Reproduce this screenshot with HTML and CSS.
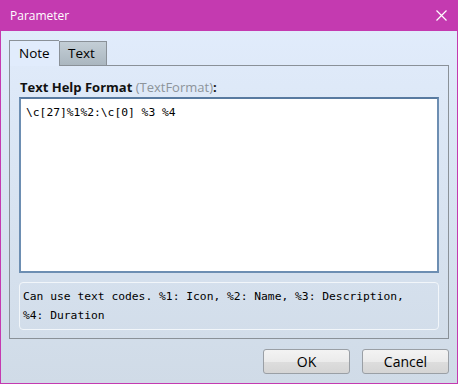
FILE: index.html
```html
<!DOCTYPE html>
<html lang="en">
<head>
  <meta charset="UTF-8" />
  <title>Parameter</title>
  <link rel="stylesheet" href="styles.css">
</head>
<body>
  <div class="window">
    <header class="titlebar">
      <span class="title">Parameter</span>
      <svg class="close" width="11" height="11" viewBox="0 0 11 11">
        <path d="M0.5 0.5 L10.5 10.5 M10.5 0.5 L0.5 10.5" stroke="#fff" stroke-width="1.2" fill="none" />
      </svg>
    </header>

    <div class="content">
      <div class="tabs">
        <div class="tab active">Note</div>
        <div class="tab">Text</div>
      </div>

      <section class="panel">
        <label class="field-label">Text Help Format <span class="hint">(TextFormat)</span>:</label>
        <div class="editor">\c[27]%1%2:\c[0] %3 %4</div>
        <div class="note">Can use text codes. %1: Icon, %2: Name, %3: Description,<br>%4: Duration</div>
      </section>

      <div class="buttons">
        <button class="btn">OK</button>
        <button class="btn">Cancel</button>
      </div>
    </div>
  </div>
</body>
</html>
```

FILE: styles.css
```css
* { box-sizing: border-box; margin: 0; padding: 0; }
html, body { width: 458px; height: 384px; overflow: hidden; }
body {
  font-family: 'Open Sans', 'Noto Sans', sans-serif;
  font-size: 12px;
  color: #000;
}

.window {
  width: 458px;
  height: 384px;
  border: 1px solid #c43ab0;
  border-top: none;
  display: flex;
  flex-direction: column;
  background: linear-gradient(#e2edfd, #d0dbe7);
}

.titlebar {
  height: 31px;
  margin: 0 -1px;
  background-color: #c43ab0;
  display: flex;
  align-items: center;
  justify-content: space-between;
  padding: 0 11px 1px 10px;
  color: #fff;
}
.title { font-size: 12px; }
.close { display: block; margin-top: 1px; }

.content {
  flex: 1;
  padding: 9px 8px 9px 8px;
  display: flex;
  flex-direction: column;
}

.tabs {
  display: flex;
  align-items: flex-end;
  height: 25px;
  position: relative;
  z-index: 1;
}
.tab {
  height: 24px;
  padding: 0 8px;
  border: 1px solid #8a9198;
  border-bottom: none;
  background: linear-gradient(#c3ced6, #abb7c0);
  font-size: 13.5px;
  line-height: 22px;
}
.tab.active {
  height: 26px;
  width: 50px;
  margin-bottom: -1px;
  padding: 0 9px;
  background: #e1ecfc;
  border-right: none;
  line-height: 25px;
}
.tab:not(.active) { width: 48px; border-left: 1px solid #8a9198; }

.panel {
  height: 274px;
  border: 1px solid #8a9198;
  padding: 13px 9px 8px 9px;
  display: flex;
  flex-direction: column;
}

.field-label {
  font-weight: 700;
  font-size: 13px;
  line-height: 16px;
  margin-left: 1px;
  margin-bottom: 2px;
  color: #111;
}
.field-label .hint { color: #8d949a; font-weight: 400; }

.editor {
  height: 177px;
  background: #fff;
  border: 2px solid #6d8eb2;
  border-top-color: #587aa0;
  font-family: 'DejaVu Sans Mono', monospace;
  font-size: 11.3px;
  line-height: 16px;
  padding: 6px 5px;
}

.note {
  margin-top: 9px;
  height: 48px;
  border: 1px solid #f2f6fa;
  border-radius: 4px;
  font-family: 'DejaVu Sans Mono', monospace;
  font-size: 11.3px;
  line-height: 19px;
  padding: 4px 3px;
}

.buttons {
  display: flex;
  justify-content: flex-end;
  gap: 12px;
  margin-top: 10px;
}
.btn {
  width: 87px;
  height: 25px;
  border: 1px solid #9a9fa5;
  border-radius: 3px;
  background: linear-gradient(#f3f3f3 0%, #ebebeb 50%, #dddddd 51%, #d5d5d5 100%);
  font-family: 'Open Sans', 'Noto Sans', sans-serif;
  font-size: 14px;
  color: #000;
}
```
